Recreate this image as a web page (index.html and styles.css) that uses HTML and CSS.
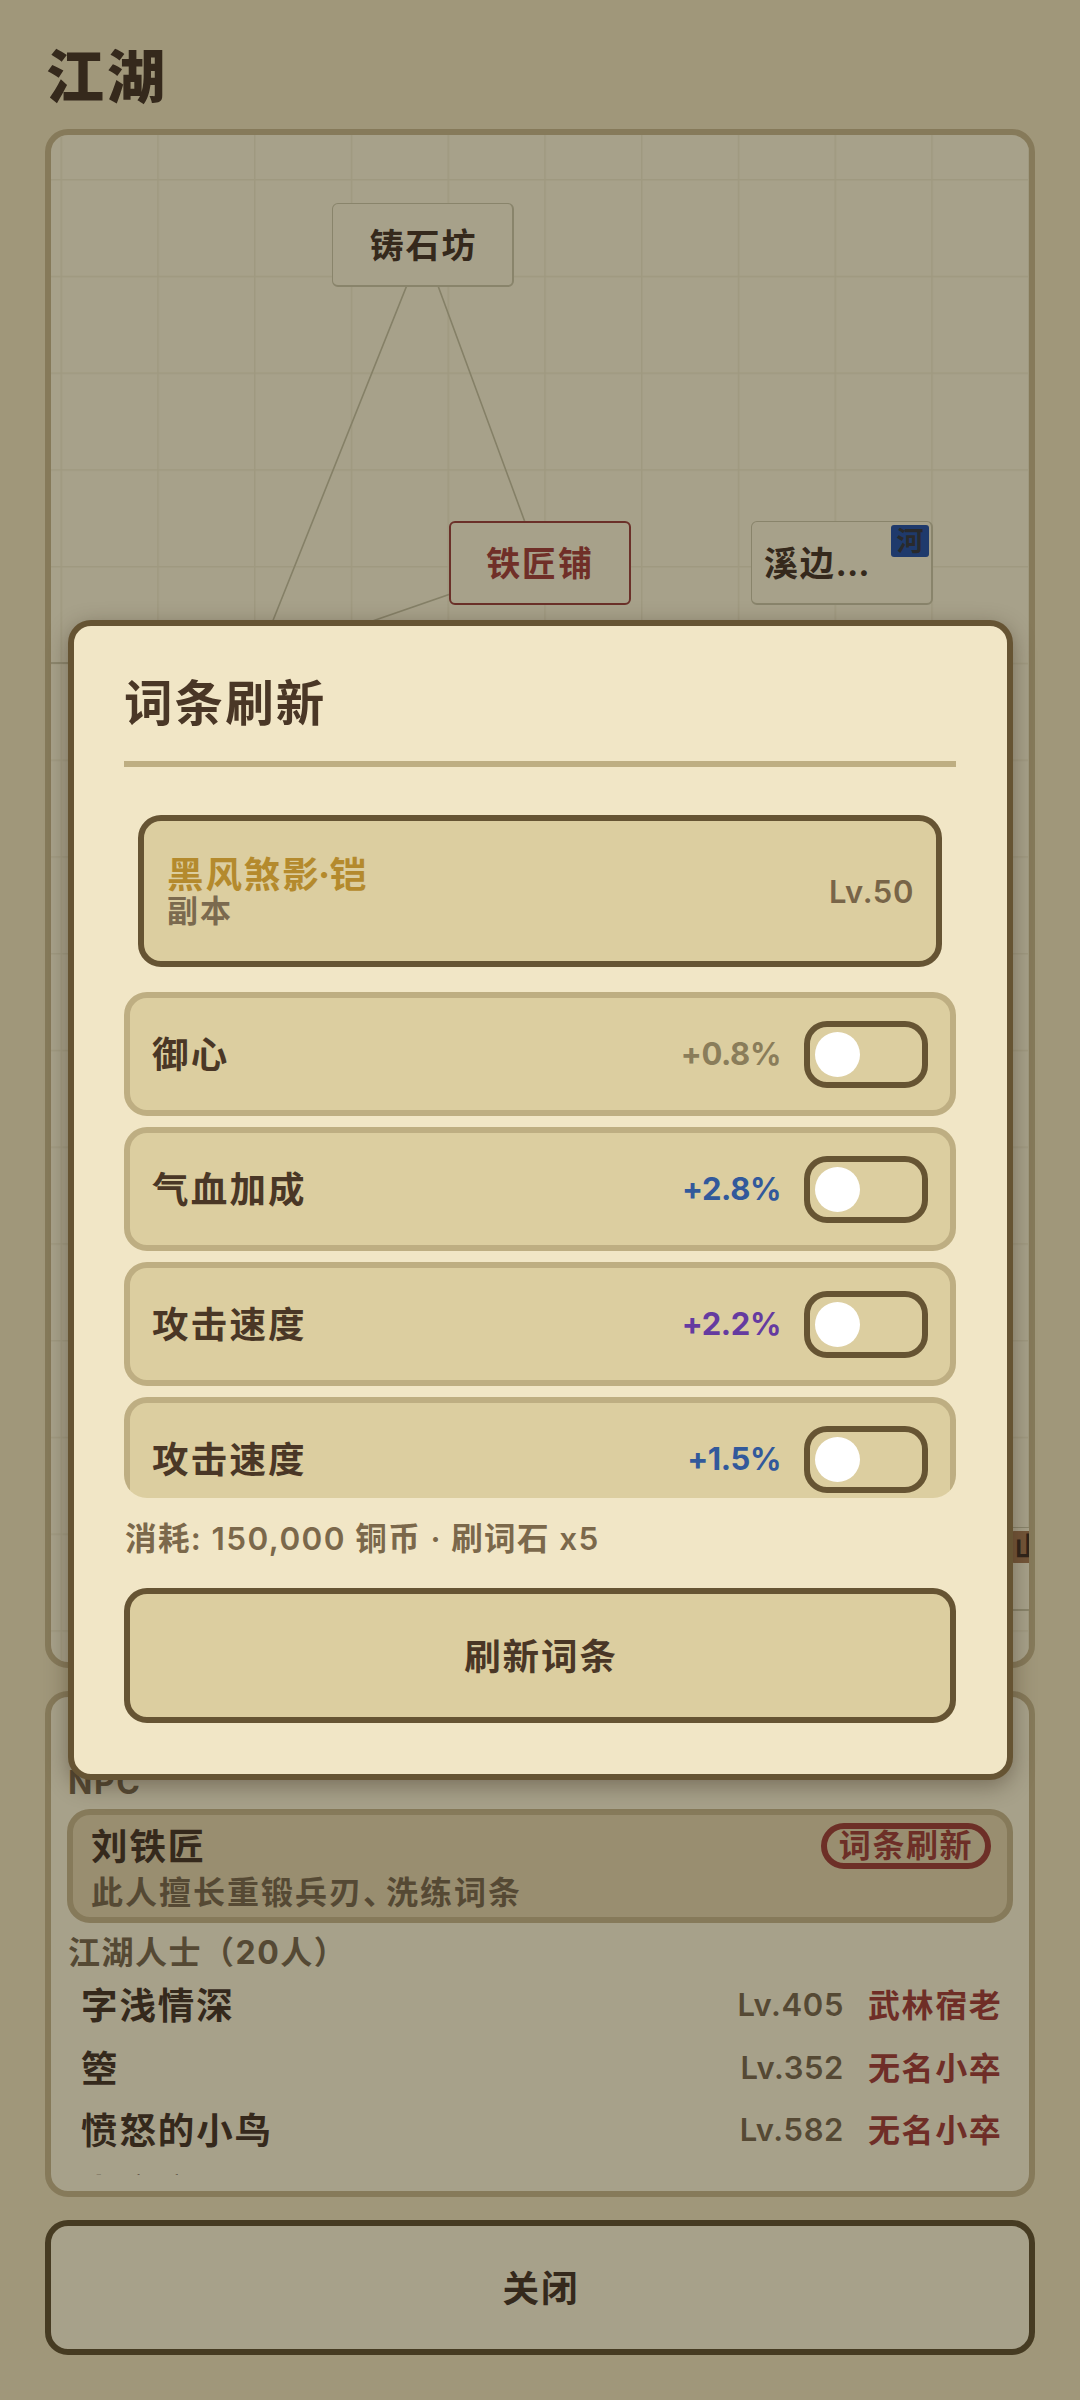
FILE: index.html
```html
<!DOCTYPE html>
<html lang="zh-CN">
<head>
<meta charset="utf-8">
<title>江湖</title>
<link rel="stylesheet" href="styles.css">
</head>
<body>
<main class="page">
  <h1 class="page-title">江湖</h1>

  <section class="map">
    <svg class="map-lines" width="978" height="1528" viewBox="51 135 978 1528">
      <defs>
        <pattern id="grid" x="60.5" y="82.2" width="96.75" height="96.75" patternUnits="userSpaceOnUse">
          <path d="M.75 0V96.75M0 .75H96.75" class="grid-line"/>
        </pattern>
      </defs>
      <rect x="51" y="135" width="978" height="1528" fill="url(#grid)"/>
      <path class="link" d="M423 245L256 663M423 245L540 563L335 634M51 663H75"/>
    </svg>
    <div class="node node-foundry">铸石坊</div>
    <div class="node node-smithy">铁匠铺</div>
    <div class="node node-brook">溪边<span class="more">...</span><span class="terrain river">河</span></div>
    <div class="node node-hill"><span class="terrain hill">山</span></div>
  </section>

  <section class="info">
    <div class="info-scroll">
      <div class="group">NPC</div>
      <div class="npc">
        <div class="npc-head"><span class="name">刘铁匠</span><span class="tag">词条刷新</span></div>
        <div class="npc-desc">此人擅长重锻兵刃<span class="stop">、</span>洗练词条</div>
      </div>
      <div class="group people">江湖人士（20人）</div>
      <div class="person"><span class="name">字浅情深</span><span class="level">Lv.405</span><span class="rank">武林宿老</span></div>
      <div class="person"><span class="name">箜</span><span class="level">Lv.352</span><span class="rank">无名小卒</span></div>
      <div class="person"><span class="name">愤怒的小鸟</span><span class="level">Lv.582</span><span class="rank">无名小卒</span></div>
      <div class="person"><span class="name">少文文</span></div>
    </div>
  </section>

  <button class="btn close">关闭</button>
</main>

<div class="overlay">
  <div class="modal">
    <h2 class="modal-title">词条刷新</h2>
    <div class="item">
      <div class="item-text"><div class="item-name">黑风煞影<span class="dot">·</span>铠</div><div class="item-source">副本</div></div>
      <span class="level">Lv.50</span>
    </div>
    <div class="affixes">
      <div class="affix"><span class="name">御心</span><span class="value common">+0.8%</span><span class="toggle"></span></div>
      <div class="affix"><span class="name">气血加成</span><span class="value rare">+2.8%</span><span class="toggle"></span></div>
      <div class="affix"><span class="name">攻击速度</span><span class="value epic">+2.2%</span><span class="toggle"></span></div>
      <div class="affix"><span class="name">攻击速度</span><span class="value rare">+1.5%</span><span class="toggle"></span></div>
    </div>
    <div class="cost">消耗: 150,000 铜币 · 刷词石 x5</div>
    <button class="btn refresh">刷新词条</button>
  </div>
</div>
</body>
</html>
```
FILE: styles.css
```css
* { box-sizing: border-box; }

body {
  margin: 0;
  width: 1080px;
  height: 2400px;
  overflow: hidden;
  position: relative;
  background: #a0977a;
  color: #35291c;
  font-family: Inter, "Noto Sans CJK SC", sans-serif;
  font-size: 36.5px;
  font-weight: 700;
  line-height: 44px;
  letter-spacing: 1.9px;
  white-space: nowrap;
}

.page {
  height: 2400px;
  padding: 0 45px 45px;
  display: flex;
  flex-direction: column;
}

.page-title {
  margin: 0;
  height: 129px;
  padding: 37px 0 0 1px;
  font-size: 58px;
  font-weight: 900;
  line-height: 80px;
  letter-spacing: 3px;
}

/* World map */
.map {
  position: relative;
  height: 1539px;
  border: 6px solid #867a5a;
  border-radius: 23px;
  background: #a7a18a;
  overflow: hidden;
}
.map-lines { display: block; }
.grid-line { stroke: #9f9980; stroke-width: 1.5; fill: none; }
.link { stroke: #858067; stroke-width: 1.6; fill: none; }

.node {
  position: absolute;
  width: 182px;
  height: 84px;
  border: 1.5px solid #89846b;
  border-right-width: 2.5px;
  border-bottom-width: 2.5px;
  border-radius: 6px;
  background: #a7a18a;
  font-size: 34px;
  letter-spacing: 1.8px;
  line-height: 83px;
  text-align: center;
}
.node-foundry { left: 281px; top: 68px; padding-left: 2px; }
.node-smithy { left: 398px; top: 386px; border: 2px solid #6b3029; color: #702f28; line-height: 82px; }
.node-brook { left: 700px; top: 386px; padding-left: 12px; text-align: left; }
.node-hill { left: 820px; top: 1392px; }
.more { letter-spacing: 0; }

.terrain {
  position: absolute;
  top: 3px;
  right: 2px;
  width: 38px;
  height: 32px;
  border-radius: 3px;
  color: #292a2c;
  font-size: 27px;
  letter-spacing: 0;
  line-height: 33px;
  text-align: center;
}
.river { background: #1f3a6c; }
.hill { padding-right: 4px; background: #735538; color: #30241a; }

/* Location details */
.info {
  margin-top: 23px;
  height: 506px;
  padding: 16px;
  border: 6px solid #867a5a;
  border-radius: 23px;
  background: #a7a18a;
}
.info-scroll { height: 462px; overflow: hidden; }

.group {
  height: 42px;
  margin-top: 48px;
  padding-left: 1px;
  color: #554934;
  font-size: 32px;
  line-height: 43px;
  letter-spacing: 1.5px;
}
.group.people { margin-top: 8px; }

.npc {
  height: 114px;
  margin-top: 6px;
  padding: 8px 16px 0 18px;
  border: 6px solid #867a5a;
  border-radius: 23px;
  background: #998e70;
}
.npc-head { display: flex; justify-content: space-between; }
.npc-head .name { padding: 0; line-height: 49px; height: 46px; }
.tag {
  width: 170px;
  height: 46px;
  border: 6px solid #6d2f27;
  border-radius: 23px;
  color: #6d2f27;
  font-size: 32px;
  letter-spacing: 1.6px;
  line-height: 34px;
  text-align: center;
}
.npc-desc {
  color: #554934;
  font-size: 32px;
  letter-spacing: 2px;
  line-height: 48px;
}
.stop { letter-spacing: -9px; }

.person {
  height: 62.4px;
  padding: 0 12px 0 14px;
  display: flex;
  align-items: center;
}
.group.people + .person { margin-top: 1px; }
.name { padding-top: 2px; }
.person .name { flex: 1; }
.person .level { color: #554934; font-size: 31px; }
.rank {
  width: 133px;
  margin-left: 24px;
  padding-top: 2px;
  color: #6f2e27;
  font-size: 32px;
  letter-spacing: 1.6px;
}

.btn {
  width: 100%;
  height: 135px;
  padding: 2px 0 0 2px;
  border: 6px solid #665433;
  border-radius: 23px;
  color: inherit;
  font: inherit;
  letter-spacing: inherit;
}
.close { margin-top: 23px; border-color: #463b22; background: #a7a18a; }
.refresh { background: #dccea0; }

/* Affix reroll dialog */
.overlay {
  position: absolute;
  inset: 0;
  display: flex;
  align-items: center;
  justify-content: center;
}
.modal {
  width: 945px;
  height: 1160px;
  padding: 0 50.5px;
  border: 6px solid #665433;
  border-radius: 23px;
  background: #f1e6c6;
  box-shadow: 0 6px 22px rgba(50, 35, 20, .4);
  color: #4a3726;
}
.modal-title {
  margin: 0 0 48px;
  height: 141px;
  padding-top: 48px;
  border-bottom: 6px solid #beae82;
  font-size: 48.5px;
  line-height: 60px;
  letter-spacing: 2.1px;
}

.item {
  height: 152px;
  margin: 0 14px 25px;
  padding: 2px 22px 0 23px;
  display: flex;
  align-items: center;
  justify-content: space-between;
  border: 6px solid #665433;
  border-radius: 23px;
  background: #dccea0;
}
.item-name { color: #b48a2d; line-height: 38px; }
.dot { margin: 0 -2.5px; }
.item-source { color: #7b6a4f; font-size: 31px; line-height: 34px; }
.item .level { color: #786548; font-size: 31px; }
.level { font-weight: 600; letter-spacing: .6px; }

.affixes {
  height: 506px;
  overflow: hidden;
  border-radius: 0 0 23px 23px;
  display: flex;
  flex-direction: column;
  gap: 11px;
}
.affix {
  flex: 0 0 124px;
  padding: 0 22px 0 22px;
  display: flex;
  align-items: center;
  border: 6px solid #beae82;
  border-radius: 23px;
  background: #dccea0;
}
.affix .name { flex: 1; letter-spacing: 2.2px; }
.value {
  margin-right: 23px;
  font-size: 31px;
  font-weight: 700;
  letter-spacing: -.4px;
}
.common { color: #8a7d5a; }
.rare { color: #32599b; }
.epic { color: #653ba0; }

.toggle {
  width: 124px;
  height: 67px;
  padding: 5px;
  border: 6px solid #665433;
  border-radius: 23px;
}
.toggle::before {
  content: "";
  display: block;
  width: 45px;
  height: 45px;
  border-radius: 50%;
  background: #fff;
}

.cost {
  height: 90px;
  padding-left: 1px;
  color: #7b684b;
  font-size: 31.5px;
  font-weight: 600;
  letter-spacing: 1.4px;
  line-height: 81px;
}
```
